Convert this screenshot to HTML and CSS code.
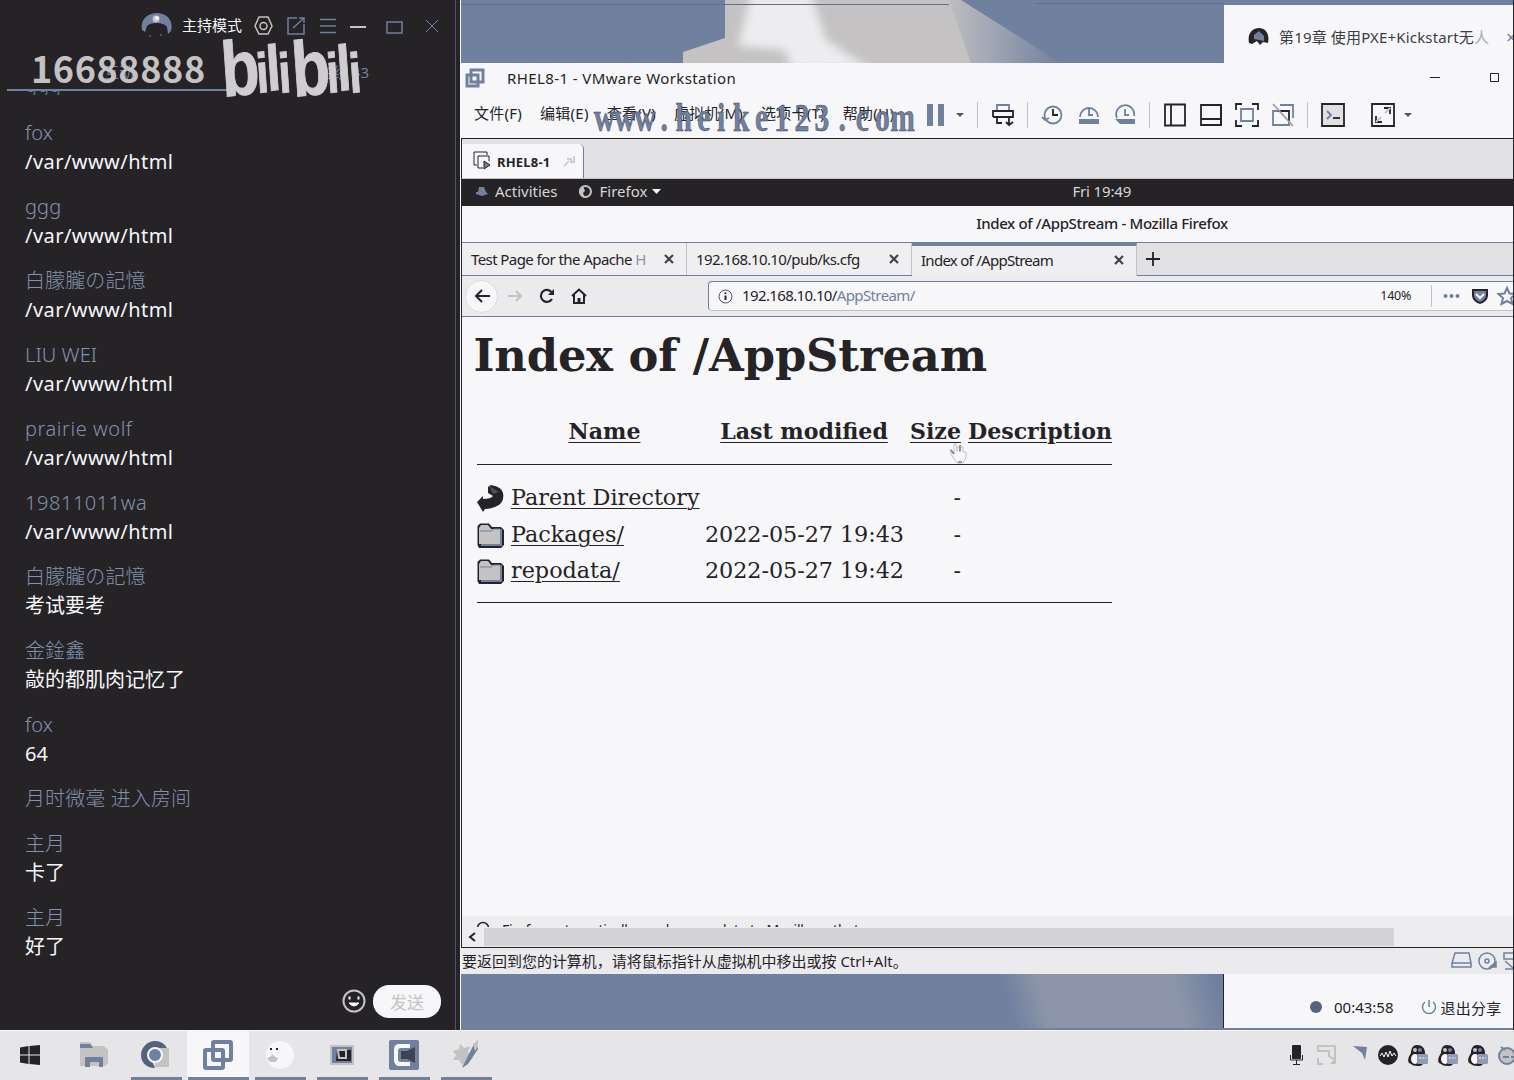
FILE: index.html
```html
<!DOCTYPE html>
<html lang="zh-CN">
<head>
<meta charset="utf-8">
<title>Index of /AppStream</title>
<link rel="stylesheet" href="styles.css">
</head>
<body>
<svg class="defs" width="0" height="0">
  <defs>
    <linearGradient id="cloudEdge"><stop offset="0" stop-color="#c4c2c3"/><stop offset="1" stop-color="#70809f"/></linearGradient>
    <filter id="soft" x="-10%" y="-10%" width="120%" height="120%"><feGaussianBlur stdDeviation="5"/></filter>
    <symbol id="clock" viewBox="0 0 24 24"><circle cx="12" cy="12" r="8.5"/><path d="M12 6v6h5" class="dk"/></symbol>
    <symbol id="penguin" viewBox="0 0 22 22"><path d="M10 1C5 1 4 6 4 9c-2 3-4 7-2 10l2 1c1 1 3 2 7 2s6-2 7-6V9c0-5-3-8-8-8z" fill="#252326"/><ellipse cx="8" cy="15" rx="4" ry="5" fill="#f7f7fa"/><circle cx="8" cy="6" r="2" fill="#c4c2c3"/><circle cx="13" cy="6" r="2" fill="#70809f"/><rect x="10" y="10" width="11" height="10" rx="1.500" fill="#8f9bb3"/><path d="M12 14h7" stroke="#f7f7fa" stroke-dasharray="2 1"/></symbol>
    <symbol id="folder" viewBox="0 0 30 28"><path d="M3 27 1.500 24V5L4 2.500h9L16 6h9l3 3v15l-3 3z" fill="#252326"/><path d="M3 23V7l2-3h7l3 4h9l1 15z" fill="#c4c2c3"/><path d="M4 10h11l3-2h6" stroke="#70809f" fill="none"/><path d="M25 8v16H5" stroke="#70809f" stroke-width="2" fill="none"/></symbol>
  </defs>
</svg>
<div class="desktop">
  <main class="screen">
    <section class="chat">
      <header class="chat-bar">
        <svg class="avatar" width="32" height="26" viewBox="0 0 32 26"><path d="M1 18C-1 7 7 1 16 1s17 7 14 18l-3 3-1-7c-3-5-17-5-20-1l-2 6z" fill="#70809f"/><circle cx="15" cy="7" r="3.500" fill="#c4c2c3"/><circle cx="16" cy="6" r="2" fill="#f7f7fa"/><path d="M8 24h2m9-1h2" stroke="#70809f"/></svg>
        <span class="mode">主持模式</span>
        <svg class="ln light" width="22" height="22" viewBox="0 0 22 22"><path d="M6 2h9l4 9-4 8H6l-4-8z"/><circle cx="10.500" cy="11" r="3.500"/></svg>
        <svg class="ln blue" width="20" height="20" viewBox="0 0 20 20"><path d="M11 2H2v16h16V8M7 12 18 2M13 2h5v5"/></svg>
        <svg class="ln blue" width="18" height="18" viewBox="0 0 18 18"><path d="M1 2.500h16M1 9h16M1 15.500h16"/></svg>
        <svg class="ln light" width="16" height="18" viewBox="0 0 16 18"><path d="M0 10h16" stroke-width="2"/></svg>
        <svg class="ln blue mx" width="17" height="16" viewBox="0 0 17 16"><rect x="1" y="3" width="15" height="11"/></svg>
        <svg class="ln blue cl" width="14" height="14" viewBox="0 0 14 14"><path d="m1 1 12 12M13 1 1 13" stroke-width="1"/></svg>
      </header>
      <div class="chat-tabs"><span class="tab-active">互动</span><span>在线 43</span></div>
      <div class="cut"><span>ggg</span></div>
      <div class="log">
        <div class="msg"><b>fox</b><p>/var/www/html</p></div>
        <div class="msg"><b>ggg</b><p>/var/www/html</p></div>
        <div class="msg"><b>白朦朧の記憶</b><p>/var/www/html</p></div>
        <div class="msg"><b>LIU WEI</b><p>/var/www/html</p></div>
        <div class="msg"><b class="w">prairie wolf</b><p>/var/www/html</p></div>
        <div class="msg"><b class="w">19811011wa</b><p>/var/www/html</p></div>
        <div class="msg"><b>白朦朧の記憶</b><p class="han">考试要考</p></div>
        <div class="msg"><b>金鍂鑫</b><p class="han">敲的都肌肉记忆了</p></div>
        <div class="msg"><b>fox</b><p class="han">64</p></div>
        <div class="msg"><b>月时微毫 进入房间</b></div>
        <div class="msg"><b>主月</b><p class="han">卡了</p></div>
        <div class="msg"><b>主月</b><p class="han">好了</p></div>
      </div>
      <footer class="chat-send">
        <svg width="24" height="24" viewBox="0 0 24 24" fill="none" stroke="#c4c2c3" stroke-width="2"><circle cx="12" cy="12" r="10.500"/><path d="M7.500 7.500v3M16.500 7.500v3" stroke="#f7f7fa"/><path d="M7 14q5 6 10 0z" stroke="#f7f7fa" fill="#f7f7fa" stroke-width="1"/></svg>
        <button>发送</button>
      </footer>
      <div class="room">16688888</div>
      <svg class="brand" width="150" height="70" viewBox="0 0 150 70"><g transform="scale(.8 1)"><text rotate="-5"><tspan class="lb" x="5" y="65">b</tspan><tspan class="li" x="48" y="61">i</tspan><tspan class="ll" x="61" y="59">l</tspan><tspan class="li" x="76" y="61">i</tspan><tspan class="lb" x="93" y="65">b</tspan><tspan class="li" x="136" y="61">i</tspan><tspan class="ll" x="149" y="59">l</tspan><tspan class="li" x="164" y="61">i</tspan></text></g></svg>
    </section>

    <section class="share">
      <div class="wall top">
        <svg class="sky" width="763" height="63" viewBox="0 0 763 63">
          <path d="M0 0h763v63H0z" fill="#70809f"/>
          <path d="M480 0h20L600 63H480z" fill="url(#cloudEdge)"/>
          <path d="M222 63V52l42-14V0h224l22 63z" fill="#c4c2c3"/>
          <path d="M290-5h60l15 45 45 30h-80l-5-20-48-4z" fill="#ededf0" filter="url(#soft)"/>
          <path d="M0 4.500h488M575 3.500h188" stroke="#5f6d8a"/>
        </svg>
        <div class="course">
          <svg width="22" height="20" viewBox="0 0 22 20"><path d="M1 16C-1 6 5 1 11 1s11 5 9 15l-5-1-3 3-3-4-5 3z" fill="#252326"/><path d="M6 12V8l5-4 5 5v5z" fill="#70809f"/></svg>
          <span>第19章 使用PXE+Kickstart无<i>人</i></span><em>×</em>
        </div>
      </div>

      <div class="vm">
        <div class="vm-title">
          <svg width="20" height="21" viewBox="0 0 20 21" fill="none" stroke="#70809f" stroke-width="3"><path d="M6 2h12v12H6z"/><path d="M2 7h11v11H2z"/></svg>
          <span>RHEL8-1 - VMware Workstation</span>
          <svg class="win" width="70" height="14" viewBox="0 0 70 14" fill="none" stroke="#252326"><path d="M0 6.500h10"/><path d="M60.500 2.500h8v8h-8z"/></svg>
        </div>
        <div class="vm-menu">
          <nav><span>文件(F)</span><span>编辑(E)</span><span>查看(V)</span><span>虚拟机(M)</span><span>选项卡(T)</span><span>帮助(H)</span></nav>
          <div class="tools">
            <svg style="width:30px" viewBox="0 0 30 24"><path d="M7 1h6v22H7zM18 1h6v22h-6z" fill="#70809f" stroke="none"/></svg>
            <svg style="width:20px" viewBox="0 0 20 24"><path d="M6 10h8l-4 4z" class="f"/></svg>
            <i style="width:16px"></i>
            <svg style="width:36px" viewBox="-6 0 36 24"><path d="M5 8V2h12v6"/><path class="dk" d="M1 14V8h20v6H1M5 14v6h5M17 14v8m-3-3 3 3 4-3"/></svg>
            <i style="width:12px"></i><s></s>
            <svg style="width:36px" viewBox="-6 0 36 24"><use href="#clock" width="24" height="24"/><path d="m1 14 3 3 4-2"/></svg>
            <svg style="width:36px" viewBox="-6 0 36 24"><path d="M3 14a9 9 0 1 1 18 0M12 6v6h4"/><path d="M2 16h20v5H2z" fill="#70809f" stroke="none"/></svg>
            <svg style="width:36px" viewBox="-6 0 36 24"><path d="M4 15a9 9 0 1 1 17-2M12 6v6h4"/><path d="M2 16h20v5H7z" fill="#70809f" stroke="none"/></svg>
            <i style="width:14px"></i>
            <svg class="dk" style="width:36px" viewBox="-6 0 36 24"><path d="M2 1.500h20v21H2zM8 1.500v21"/></svg>
            <svg class="dk" style="width:36px" viewBox="-6 0 36 24"><path d="M2 2h20v20H2zM2 16h20" /><path d="M22 2v20"/></svg>
            <svg class="dk" style="width:36px" viewBox="-6 0 36 24"><path d="M1 7V1h6M17 1h6v6M23 17v6h-6M7 23H1v-6"/><path d="M6 6h12v12H6z" stroke="#70809f"/></svg>
            <svg class="dk" style="width:36px" viewBox="-6 0 36 24"><path d="M9 2h13v13M18 18v4H2V8h5" stroke="#70809f"/><path d="M7 8h11v10"/><path d="m2 1 20 22" stroke="#9a9ca6"/></svg>
            <i style="width:14px"></i>
            <svg class="dk" style="width:36px" viewBox="-6 0 36 24"><path d="M1 1h22v22H1z" fill="#e0e0e2"/><path d="m6 8 4 4-4 4" stroke="#70809f"/><path d="M12 15h7"/></svg>
            <b></b>
            <svg class="dk" style="width:36px" viewBox="-6 0 36 24"><path d="M1 1h22v22H1zM13 5h6v6M11 19H5v-6"/><path d="m19 5-5 5M5 19l5-5" stroke="#c4c2c3"/></svg>
            <svg style="width:14px" viewBox="0 0 14 24"><path d="M3 10h8l-4 4z" class="f"/></svg>
          </div>
        </div>
        <div class="vm-tabs"><div class="vm-tab">
          <svg width="18" height="20" viewBox="0 0 18 20" fill="none" stroke="#252326"><path d="M4 14H1V1h13v3"/><path d="M16 10V5H5v12h5"/><path d="m11 10 6 4-6 4z" fill="#70809f"/></svg>
          <span>RHEL8-1</span><svg width="12" height="12" viewBox="0 0 12 12" fill="none" stroke="#c4c2c3" stroke-width="1.500"><path d="m0 11 5-5M3 4h4v4M10 1v6H7"/></svg></div></div>

        <div class="guest">
          <div class="gnome">
            <svg width="13" height="10" viewBox="0 0 13 10"><path d="M3 6 4 1l5 0 2 5 2 2-6 2-6-2 0-2z" fill="#70809f"/></svg>
            <span class="act">Activities</span>
            <svg width="15" height="15" viewBox="0 0 15 15"><circle cx="7.500" cy="7.500" r="5.500" fill="none" stroke="#c4c2c3" stroke-width="2"/><path d="M5 2Q1 3 1 8q1 5 6 6L5 9l2-2z" fill="#c4c2c3"/></svg>
            <span class="ff">Firefox</span>
            <svg class="dd" width="10" height="6" viewBox="0 0 10 6"><path d="M0 0h9L4.500 5z" fill="#f7f7fa"/></svg>
            <time>Fri 19:49</time>
          </div>
          <div class="ff-title"><span>Index of /AppStream - Mozilla Firefox</span></div>
          <div class="ff-tabs">
            <div class="ff-tab"><span class="t1">Test Page for the Apache <i>H</i></span><svg class="x" viewBox="0 0 10 10"><path d="m1 1 8 8M9 1 1 9"/></svg></div>
            <div class="ff-tab"><span class="t2">192.168.10.10/pub/ks.cfg</span><svg class="x" viewBox="0 0 10 10"><path d="m1 1 8 8M9 1 1 9"/></svg></div>
            <div class="ff-tab on"><span class="t3">Index of /AppStream</span><svg class="x" viewBox="0 0 10 10"><path d="m1 1 8 8M9 1 1 9"/></svg></div>
            <svg class="plus" width="14" height="14" viewBox="0 0 14 14"><path d="M7 0v14M0 7h14" stroke="#252326" stroke-width="1.800"/></svg>
          </div>
          <div class="ff-bar">
            <div class="back"><svg width="16" height="14" viewBox="0 0 16 14" fill="none" stroke="#252326" stroke-width="2"><path d="M16 7H2M8 1 2 7l6 6"/></svg></div>
            <svg width="15" height="12" viewBox="0 0 15 12" fill="none" stroke="#c4c2c3" stroke-width="2"><path d="M0 6h13M8 1l5 5-5 5"/></svg>
            <svg class="rl" width="16" height="16" viewBox="0 0 16 16" fill="none" stroke="#252326" stroke-width="2.200"><path d="M12.500 4A6 6 0 1 0 13 11"/><path d="M15 1v6H9z" fill="#252326" stroke="none"/></svg>
            <svg class="hm" width="16" height="16" viewBox="0 0 16 16" fill="none" stroke="#252326" stroke-width="2"><path d="m1 8 7-6.500L15 8M3 7v8h10V7"/><path d="M8 10v5" stroke-width="3"/></svg>
            <div class="url">
              <svg width="15" height="15" viewBox="0 0 15 15" fill="none" stroke="#55565c"><circle cx="7.500" cy="7.500" r="6.500"/><path d="M7.500 6.500V11M7.500 3.500v1.500" stroke-width="2" stroke="#252326"/></svg>
              <span class="addr">192.168.10.10/<i>AppStream/</i></span>
              <small>140%</small>
              <svg class="acts" width="82" height="24" viewBox="0 0 82 24"><path d="M.5 1v22" stroke="#c4c2c3"/><g fill="#70809f"><circle cx="14.500" cy="12" r="2"/><circle cx="20.500" cy="12" r="2"/><circle cx="26.500" cy="12" r="2"/></g><path d="M41 5h16v7q-1 6-8 8-7-2-8-8z" fill="#252326"/><path d="M43 7h12v5q-1 4-6 6-5-2-6-6z" fill="#70809f"/><path d="m45 10 4 4 4-4" fill="none" stroke="#f7f7fa" stroke-width="2"/><path d="m76 4 2.500 5.500 6 .5-4.500 4 1.500 6-5.500-3-5.500 3 1.500-6L67.500 10l6-.5z" fill="none" stroke="#70809f" stroke-width="2"/></svg>
            </div>
          </div>
          <div class="page">
            <h1>Index of /AppStream</h1>
            <div class="row head"><span></span><a>Name</a><a>Last modified</a><a>Size</a><a>Description</a></div>
            <hr>
            <div class="row"><svg width="30" height="28" viewBox="0 0 30 28"><path d="m1 18 6-6v3q8 0 10-3L12 9V3l3-2q11 2 12 8 2 10-8 14-5 2-10 2l-2 3z" fill="#252326"/><path d="m13 2 10 6-6 2z" fill="#70809f" opacity=".5"/></svg><a>Parent Directory</a><span></span><span>-</span></div>
            <div class="row"><svg width="30" height="28"><use href="#folder"/></svg><a>Packages/</a><span>2022-05-27 19:43</span><span>-</span></div>
            <div class="row"><svg width="30" height="28"><use href="#folder"/></svg><a>repodata/</a><span>2022-05-27 19:42</span><span>-</span></div>
            <hr class="end">
            <svg class="hand" width="19" height="22" viewBox="0 0 19 22"><path d="m1 7 4 5V2h2l1 7V5h3v5-5h3v5h3v5l-3 6H8l-6-9z" fill="#f7f7fa" stroke="#c4c2c3"/><path d="M11 3v6m-9-1 3 4m4 8h4" stroke="#70809f" stroke-width="1.500"/></svg>
          </div>
          <div class="notice"><svg width="14" height="14" viewBox="0 0 14 14" fill="none" stroke="#252326" stroke-width="1.500"><circle cx="7" cy="7" r="5.500"/></svg><span>Firefox automatically sends some data to Mozilla so that</span></div>
          <div class="scroll"><svg width="8" height="10" viewBox="0 0 8 10"><path d="M7 1 2 5l5 4" fill="none" stroke="#252326" stroke-width="2"/></svg><div class="thumb"></div></div>
        </div>
        <div class="vm-status"><span>要返回到您的计算机，请将鼠标指针从虚拟机中移出或按 Ctrl+Alt。</span>
          <svg width="62" height="20" viewBox="0 0 62 20" fill="none" stroke="#70809f" stroke-width="1.500"><path d="m4 2h14l2 10v4H1v-4zM1 12h19"/><circle cx="36" cy="10" r="8"/><circle cx="36" cy="10" r="2"/><path d="M39 16h6v-5z" fill="#70809f"/><path d="M62 2h-9v6h9M54 18h8m-8-8 8 7"/></svg>
        </div>
      </div>

      <div class="wall bottom">
        <div class="sea"></div>
        <div class="live"><i></i><span class="tm">00:43:58</span>
          <svg width="16" height="16" viewBox="0 0 16 16" fill="none" stroke="#70809f" stroke-width="1.500"><path d="M8 1v7M4 3a6.500 6.500 0 1 0 8 0"/></svg><span class="quit">退出分享</span></div>
      </div>
      <div class="watermark"><svg width="326" height="44" viewBox="0 0 326 44"><g transform="scale(.72 1)"><text x="16 44 72 99 126 154 178 206 234 262 290 318 346 374 402 430" y="33">www.heike123.com</text></g></svg></div>
    </section>
  </main>

  <footer class="taskbar">
    <div class="app start"><svg width="20" height="20" viewBox="0 0 20 20"><path d="M0 2.500 8.500 1v8.500H0zM9.500 1 20 0v9.500H9.500zM0 10.500h8.500V19L0 17.500zM9.500 10.500H20V20L9.500 19z" fill="#252326"/></svg></div>
    <div class="app idle"><svg width="28" height="28" viewBox="0 0 28 28"><path d="M0 1h10l3 4h11l4 4v13l-3 3H0z" fill="#c4c2c3"/><path d="M0 3h10l3 4H0zM5 16h18v10h-4v-5h-9v5H5z" fill="#70809f"/></svg></div>
    <div class="app"><svg width="30" height="28" viewBox="0 0 30 28"><path d="M14 0C22 0 26 6 26 8H15l-6 7 5 12C5 27 0 21 0 14S6 0 14 0z" fill="#53627f"/><path d="M15 7h13v19H14z" fill="#c4c2c3"/><circle cx="14" cy="14" r="7" fill="#70809f" stroke="#f7f7fa" stroke-width="2"/></svg></div>
    <div class="app cur"><svg width="30" height="30" viewBox="0 0 30 30" fill="none" stroke="#70809f" stroke-width="4"><rect x="10" y="2" width="18" height="18" rx="1"/><rect x="2" y="10" width="18" height="18" rx="1"/></svg></div>
    <div class="app"><svg width="30" height="32" viewBox="0 0 30 32"><circle cx="15" cy="16" r="14" fill="#f7f7fa"/><path d="M5 10h2m4 0h2" stroke="#252326" stroke-width="2"/><path d="M2 19q4-1 5-4 4 4 6 4-1 3-3 4H5z" fill="#c4c2c3"/></svg></div>
    <div class="app"><svg width="24" height="20" viewBox="0 0 24 20"><path d="M0 0h24v20H0z" fill="#c4c2c3"/><path d="M2 2h20v16H2z" fill="#70809f"/><path d="M7 5h14v11H6z" fill="#252326"/><path d="M8 5h8v8H9z" fill="none" stroke="#c4c2c3" stroke-width="2"/></svg></div>
    <div class="app"><svg width="30" height="30" viewBox="0 0 30 30"><rect width="30" height="30" rx="2" fill="#70809f"/><path d="M21 4H9Q5 5 5 10v11q1 5 5 5h11v-4H12q-3 0-3-3v-8q0-3 3-3h9z" fill="#f7f7fa"/><path d="M12 11h6l8-4v16l-8-4h-6z" fill="#3e4252"/></svg></div>
    <div class="app"><svg width="30" height="30" viewBox="0 0 30 30"><path d="M2 11 8 9l1-5 4 4 6-2-2 6 5 7-6 1-4 6-4-6-6 0 3-5z" fill="#c4c2c3"/><path d="m23 4 4-4v9L17 24l-6 4z" fill="#70809f"/><path d="m22 4 5-4v7l-3 4z" fill="#c4c2c3"/></svg></div>
    <div class="tray">
      <svg style="width:30px" viewBox="-4 0 30 22"><rect x="6" y="1" width="9" height="14" rx="1" fill="#252326"/><path d="M4.500 11v5h12v-5M10.500 16v5M7 20.500h7" fill="none" stroke="#252326"/></svg>
      <svg style="width:34px" viewBox="-4 0 34 22"><path d="M7 7H2V2h17v17h-4M2 14v6h5M7 7h6v5l6 4-4 4" fill="none" stroke="#c4c2c3" stroke-width="2"/></svg>
      <svg style="width:27px" viewBox="-4 0 27 22"><path d="m3 2 14 1-2 13-3-7z" fill="#70809f"/></svg>
      <svg style="width:30px" viewBox="-4 0 30 22"><circle cx="11" cy="11" r="10" fill="#252326"/><path d="M3 12l2-3 2 4 2-5 2 5 2-6 2 5 2-3 2 3" stroke="#f7f7fa" fill="none"/></svg>
      <svg style="width:30px" viewBox="-4 0 30 22"><use href="#penguin" width="22" height="22"/></svg>
      <svg style="width:30px" viewBox="-4 0 30 22"><use href="#penguin" width="22" height="22"/></svg>
      <svg style="width:30px" viewBox="-4 0 30 22"><use href="#penguin" width="22" height="22"/></svg>
      <svg style="width:22px" viewBox="0 0 22 22"><circle cx="14" cy="12" r="8" fill="#c4c2c3" stroke="#70809f" stroke-width="2"/><path d="M10 13h6m2 0h3M8 3l4 3" stroke="#70809f" stroke-width="2"/></svg>
    </div>
  </footer>
</div>
</body>
</html>
```
FILE: styles.css
```css
* { box-sizing: border-box; }
body { margin: 0; background: #e6e6e8; color: #252326; font-family: "Noto Sans", "Noto Sans CJK SC", sans-serif; }
i, em { font-style: normal; }
.defs { position: absolute; }
.desktop { width: 1514px; height: 1080px; overflow: hidden; display: grid; grid-template-rows: 1030px 50px; }
.screen { display: grid; grid-template-columns: 461px 1053px; grid-template-rows: 1030px; min-height: 0; background: #252326; }

/* chat */
.chat { position: relative; background: #252326; display: flex; flex-direction: column; min-height: 0; box-shadow: inset -4px 0 #252326, inset -5px 0 #4c566b; border-right: 1px solid #f7f7fa; }
.chat-bar { height: 52px; flex: none; display: flex; align-items: center; padding-left: 141px; }
.avatar { margin-top: -2px; }
.mode { color: #f7f7fa; font-size: 15px; margin: -3px 11px 0 9px; white-space: nowrap; }
.ln { fill: none; stroke-width: 1.500; flex: none; margin-right: 11px; }
.light { stroke: #c4c2c3; }
.blue { stroke: #70809f; }
.ln + .ln { margin-right: 13px; }
.ln.mx { margin: 2px 22px 0 7px; }
.chat-tabs { height: 38px; flex: none; display: flex; justify-content: space-between; padding: 0 91px 0 104px; color: #70809f; font-size: 15px; line-height: 40px; background: linear-gradient(#70809f, #70809f) 7px 37px / 222px 2px no-repeat; }
.cut { height: 5px; flex: none; overflow: hidden; padding-left: 25px; color: #70809f; font-size: 20px; line-height: 20px; box-shadow: inset 0 1px #252326; background: linear-gradient(#70809f, #70809f) 7px 0 / 222px 1px no-repeat; box-shadow: none; }
.cut span { display: block; margin-top: -15px; font-weight: 300; }
.log { flex: 1; min-height: 0; overflow: hidden; padding: 23px 0 0 25px; }
.msg { margin-bottom: 16px; font-size: 20px; line-height: 29px; color: #f7f7fa; }
.msg b { display: block; font-weight: 300; color: #8391ad; letter-spacing: .1px; }
.msg b.w { letter-spacing: .55px; }
.msg p { margin: 0; letter-spacing: .45px; }
.msg p.han { letter-spacing: 0; }
.chat-send { height: 45px; flex: none; display: flex; justify-content: flex-end; gap: 7px; padding-right: 19px; align-items: flex-start; }
.chat-send svg { margin-top: 4px; }
.chat-send button { width: 68px; height: 33px; border: 0; border-radius: 16px; background: #f7f7fa; color: #c4c2c3; font: 400 17px "Noto Sans CJK SC", sans-serif; padding: 0; }
.room { position: absolute; left: 31px; top: 40px; font: 700 36px/54px "Noto Sans CJK SC", sans-serif; letter-spacing: .6px; color: #c4c2c3; }
.brand { position: absolute; left: 219px; top: 32px; font-family: "Liberation Sans", sans-serif; font-weight: 700; fill: #cfcdcf; stroke: #cfcdcf; stroke-width: 1; }
.lb { font-size: 78px; }
.li { font-size: 56px; }
.ll { font-size: 64px; }

/* shared desktop */
.share { position: relative; display: grid; grid-template-rows: 63px 911px 56px; border-right: 1px solid #252326; overflow: hidden; }
.wall { display: grid; grid-template-columns: 763px 1fr; background: #f7f7fa; min-height: 0; }
.sky { display: block; }
.course { display: flex; align-items: center; padding: 5px 0 0 24px; border-top: 5px solid #70809f; font-size: 15px; white-space: nowrap; overflow: hidden; color: #3b3c44; }
.course > * { flex: none; }
.course span { margin-left: 9px; letter-spacing: .16px; }
.course i { color: #a7abb8; }
.course em { color: #70809f; margin-left: 17px; font-size: 18px; }
.vm { display: grid; grid-template-rows: 32px 44px 40px 769px 26px; background: #f7f7fa; min-height: 0; overflow: hidden; }
.vm-title { display: flex; align-items: center; padding: 0 13px 2px 4px; font-size: 15px; }
.vm-title span { margin-left: 22px; letter-spacing: .4px; white-space: nowrap; }
.win { margin-left: auto; }
.vm-menu { display: flex; align-items: center; border-bottom: 1px solid #252326; padding-left: 13px; }
.vm-menu nav { display: flex; gap: 18px; width: 446px; flex: none; font-size: 15px; white-space: nowrap; margin-top: -8px; letter-spacing: .25px; }
.tools { display: flex; align-items: center; margin-top: -4px; }
.tools svg { height: 24px; flex: none; fill: none; stroke: #70809f; stroke-width: 1.800; }
.tools .dk, #clock .dk { stroke: #252326; }
.tools .f { fill: #55565c; stroke: none; }
.tools i { height: 26px; background: linear-gradient(90deg, transparent calc(50% - 1px), #c4c2c3 0, #c4c2c3 50%, transparent 0); }
.tools b { width: 14px; }
.tools s { width: 1px; }
.vm-tabs { background: #e1e1e3; padding-top: 5px; border-bottom: 1px solid #c4c2c3; border-left: 1px solid #252326; }
.vm-tab { width: 122px; height: 34px; background: #f7f7fa; border-right: 1px solid #70809f; border-radius: 0 5px 0 0; display: flex; align-items: center; padding-left: 11px; font: 700 13px "Noto Sans", sans-serif; }
.vm-tab span { margin: 2px 14px 0 6px; letter-spacing: .2px; }

/* guest */
.guest { display: grid; grid-template-rows: 27px 37px 33px 41px 599px 11px 20px; border-left: 1px solid #252326; border-bottom: 1px solid #252326; min-height: 0; overflow: hidden; }
.gnome { background: #252326; display: flex; align-items: center; padding: 0 0 3px 14px; color: #d6d5d8; font-size: 15px; margin-left: -1px; }
.act { margin: 0 20px 0 7px; }
.ff { margin: 0 5px 0 7px; }
.dd { margin-top: 2px; }
.gnome time { margin-left: 410px; letter-spacing: -.15px; }
.ff-title { border-bottom: 1px solid #70809f; display: flex; justify-content: center; padding: 0 0 2px 229px; align-items: center; font-size: 15px; font-weight: 500; white-space: nowrap; letter-spacing: -.35px; }
.ff-tabs { display: flex; background: #e1e1e3; border-bottom: 1px solid #70809f; font-size: 15px; }
.ff-tab { width: 225px; height: 32px; display: flex; align-items: center; justify-content: space-between; padding: 0 12px 0 9px; border-right: 1px solid #c4c2c3; background: #efeff1; white-space: nowrap; }
.ff-tab.on { height: 33px; border-top: 3px solid #70809f; padding-bottom: 3px; }
.ff-tab span { letter-spacing: -.58px; }
.ff-tab span.t3 { letter-spacing: -.72px; }
.ff-tab i { color: #8b94a8; }
.x { width: 10px; height: 10px; fill: none; stroke: #40424d; stroke-width: 2.200; }
.plus { margin: 9px 0 0 9px; }
.ff-bar { display: flex; align-items: center; background: #ebebed; border-bottom: 1px solid #70809f; padding-left: 3px; }
.back { width: 33px; height: 33px; border-radius: 50%; background: #f7f7fa; border: 1px solid #dcdcdf; display: grid; place-items: center; margin-right: 10px; }
.rl { margin-left: 16px; }
.hm { margin-left: 16px; }
.url { margin-left: 121px; flex: 1; height: 30px; border: 1px solid #70809f; border-right: 0; border-bottom-color: #c4c2c3; border-radius: 4px 0 0 4px; background: #f7f7fa; display: flex; align-items: center; padding-left: 9px; overflow: hidden; }
.addr { margin-left: 9px; padding-bottom: 2px; font-size: 15px; letter-spacing: -.62px; }
.addr i { color: #70809f; }
.url small { margin-left: auto; font-size: 12.500px; letter-spacing: -.3px; padding-bottom: 2px; }
.acts { margin-left: 20px; flex: none; }
.page { position: relative; padding: 8px 0 0 11.500px; background: #f7f7fa; font: 22.300px/37px "DejaVu Serif", serif; min-height: 0; overflow: hidden; }
.page h1 { margin: 0 0 26px; font: 700 44.800px/62px "DejaVu Serif", serif; white-space: nowrap; letter-spacing: -.12px; }
.row { display: grid; grid-template-columns: 35px 191px 211px 48px 158px; width: 645px; height: 36.500px; padding-left: 2.500px; white-space: nowrap; align-items: center; }
.row > * { justify-self: start; }
.row:not(.head) > a, .row:not(.head) > span { margin-top: -1.500px; }
.row a { text-decoration: underline; text-decoration-thickness: 1px; text-underline-offset: 3px; }
.row span:nth-child(3) { justify-self: end; margin-right: 9px; letter-spacing: -.05px; }
.row span:nth-child(4) { justify-self: end; }
.row.head { font-weight: 700; height: 30px; font-size: 22.100px; }
.row.head a { justify-self: center; }
.row.head a:nth-child(2) { margin-left: -4px; }
.row.head a:nth-child(3) { margin-left: -7px; }
.row.head a:nth-child(4) { margin-left: -3px; }
.row.head a:nth-child(5) { justify-self: end; margin-right: 7px; }
hr { width: 635px; margin: 21px 0 15px 3.500px; border: 0; border-top: 1px solid #252326; height: 1px; }
hr.end { margin-top: 12px; }
.hand { position: absolute; left: 487px; top: 125px; }
.notice { background: #ededef; overflow: hidden; display: flex; gap: 12px; padding: 5px 0 0 14px; font-size: 14px; line-height: 17px; white-space: nowrap; }
.notice svg, .notice span { flex: none; }
.notice span { letter-spacing: -.2px; }
.scroll { background: #ededef; display: flex; align-items: center; padding-left: 6px; }
.thumb { margin-left: 8px; width: 910px; height: 18px; background: #d3d2d4; }
.vm-status { display: flex; justify-content: space-between; align-items: center; background: #ebebed; padding-left: 1px; font-size: 15px; white-space: nowrap; }
.vm-status span { letter-spacing: -.02px; padding-bottom: 2px; }

.bottom { border-bottom: 2px solid #70809f; }
.sea { background: linear-gradient(75deg, #70809f 535px, #8c95a9 570px, #8c95a9 700px, #70809f 740px); border-right: 1px solid #252326; }
.live { display: flex; align-items: center; padding: 12px 0 0 86px; font-size: 15px; white-space: nowrap; }
.live i { width: 12px; height: 12px; border-radius: 50%; background: #56627c; }
.tm { margin: 0 27px 0 12px; }
.quit { margin-left: 4px; letter-spacing: .2px; }
.watermark { position: absolute; left: 132px; top: 98px; }
.watermark text { font: 700 41px "Liberation Serif", serif; fill: #70809f; stroke: #3e4252; stroke-width: .5; text-anchor: middle; }

/* taskbar */
.taskbar { display: flex; background: #e6e6e8; border-top: 1px solid #f7f7fa; }
.app { width: 62px; flex: none; display: grid; place-items: center; background: linear-gradient(#70809f, #70809f) center bottom / 51px 3px no-repeat; }
.app svg { margin-top: -1px; }
.app.start { width: 60px; margin-right: 2px; background: none; }
.app.idle { width: 63px; background: none; }
.app.cur { background: linear-gradient(#70809f, #70809f) center bottom / 61px 3px no-repeat, #f7f7fa; }
.tray { margin-left: auto; display: flex; align-items: center; margin-right: -1px; padding-bottom: 2px; }
.tray svg { height: 22px; flex: none; }
```
